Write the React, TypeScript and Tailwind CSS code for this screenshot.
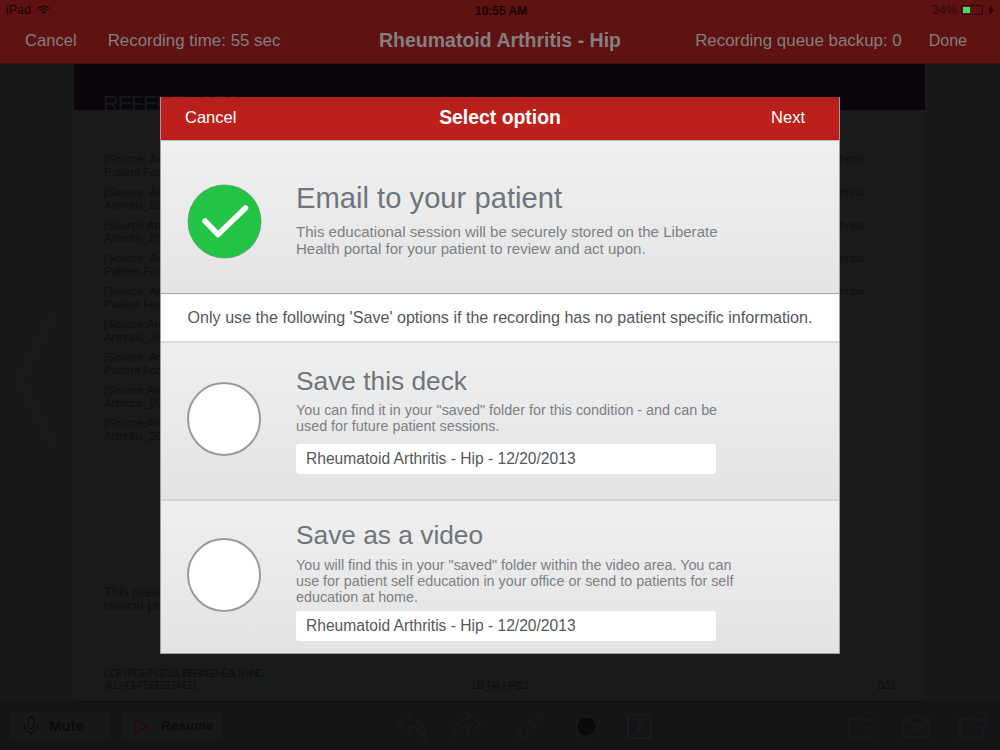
import { Camera, Mic } from "lucide-react";

const sources = [
  { first: "[Source: American College of Rheumatology,", second: "Patient Fact Sheet", end: true },
  { first: "[Source: American College of Rheumatology,", second: "Arthritis_2013", end: true },
  { first: "[Source:American College of Rheumatology,", second: "Arthritis_2013", end: true },
  { first: "[Source: American College of Rheumatology,", second: "Patient Fact Sheet", end: true },
  { first: "[Source: American College of Rheumatology,", second: "Patient Fact Sheet", end: true },
  { first: "[Source:American College of Rheumatology,", second: "Arthritis_2013", end: false },
  { first: "[Source: American College of Rheumatology,", second: "Patient Fact Sheet", end: false },
  { first: "[Source:American College of Rheumatology,", second: "Arthritis_2013", end: false },
  { first: "[Source:American College of Rheumatology,", second: "Arthritis_2013", end: false },
];

function StatusBar() {
  return (
    <div className="relative flex h-[20px] items-center justify-between pl-[6px] pr-[5px] text-[12.5px] text-[#170606]">
      <div className="flex items-center gap-[6px]">
        <span>iPad</span>
        <svg width="13" height="10" viewBox="0 0 13 10" fill="none" stroke="#170606" strokeWidth="1.4">
          <path d="M.8 3.4a8.2 8.2 0 0 1 11.4 0" />
          <path d="M2.8 5.5a5.4 5.4 0 0 1 7.4 0" />
          <path d="M4.8 7.5a2.5 2.5 0 0 1 3.4 0" />
          <path d="M6.5 10 5.4 8.7a1.6 1.6 0 0 1 2.2 0z" fill="#170606" stroke="none" />
        </svg>
      </div>
      <span className="absolute left-[475px] top-[2px] text-[12px] font-bold">10:55 AM</span>
      <div className="flex items-center gap-[3px]">
        <span className="text-[#2a0808]">34%</span>
        <div className="ml-[1px] flex h-[10px] w-[22px] items-stretch rounded-[2px] border border-[#2a0808] p-[1px]">
          <div className="w-[7px] bg-[#4cd964]" />
        </div>
        <svg width="8" height="10" viewBox="0 0 8 10" className="ml-[1px]">
          <path d="M5 0 1 5.6h2.4L2.6 10 7 4.2H4.4z" fill="#170606" />
        </svg>
      </div>
    </div>
  );
}

function NavBar() {
  return (
    <div className="relative flex h-[42px] items-center pl-[25px] pr-[33px] text-[16.9px] text-[#857f7f]">
      <span className="text-[16.6px]">Cancel</span>
      <span className="ml-[31px]">Recording time: 55 sec</span>
      <span className="absolute left-0 right-0 text-center text-[19.5px] font-bold">Rheumatoid Arthritis - Hip</span>
      <span className="ml-auto">Recording queue backup: 0</span>
      <span className="ml-[27px] text-[16px]">Done</span>
    </div>
  );
}

function Document() {
  return (
    <div className="flex flex-1 overflow-hidden bg-[#181919]">
      <div className="flex w-[74px] items-center justify-start pl-[18px]">
        <svg width="36" height="130" viewBox="0 0 36 130" fill="none" stroke="#1b1c1c" strokeWidth="1.5" className="mb-[6px]">
          <path d="M34 2 2 62l32 66" />
        </svg>
      </div>
      <div className="flex w-[851px] flex-col bg-[#1a1c1b] text-[#0e0f0f]">
        <div className="h-[46px] bg-[#0a060c]" />
        <h2 className="-mt-[19px] ml-[29px] text-[22px] leading-[26px] tracking-[-1.4px] text-[#17181a]">REFERENCES</h2>
        <div className="mt-[36px] flex flex-col gap-[7px] pl-[30px] pr-[61px] text-[11.5px] leading-[13px]">
          {sources.map((s, i) => (
            <div key={i}>
              <div className="flex justify-between">
                <span>{s.first}</span>
                {s.end && <span>Arthritis</span>}
              </div>
              <div>{s.second}</div>
            </div>
          ))}
        </div>
        <div className="ml-[30px] mt-[142px] text-[12.5px] leading-[14px] tracking-[0.3px]">
          <div>This presentation is for educational use within</div>
          <div>clinical practice only</div>
        </div>
        <div className="mt-auto flex items-end pb-[10px] pl-[30px] text-[10.5px] leading-[12px] tracking-[-1.6px]">
          <div className="w-[368px]">
            <div>COPYRIGHT ©2013 LIBERATE HEALTH INC.</div>
            <div>ALL RIGHTS RESERVED.</div>
          </div>
          <div className="w-[404px]">LIB_RA_HIP101</div>
          <div>11/13</div>
        </div>
      </div>
      <div className="w-[75px]" />
    </div>
  );
}

function ToolButton({ label, size, children }: { label: string; size: string; children: React.ReactNode }) {
  return (
    <div className={`${size} flex h-[29px] w-[102px] items-center rounded-[3px] bg-[#18191b] pl-[11px] font-bold text-[#0b0b0c]`}>
      <div className="w-[29px]">{children}</div>
      <span>{label}</span>
    </div>
  );
}

function Toolbar() {
  const icon = "#1a1b1d";
  return (
    <div className="flex h-[49px] items-center border-t border-[#111214] bg-[#141517] pl-[9px]">
      <ToolButton label="Mute" size="text-[15px]">
        <Mic size={22} strokeWidth={1} color="#080809" />
      </ToolButton>
      <div className="w-[10px]" />
      <ToolButton label="Resume" size="text-[13.6px]">
        <svg width="17" height="17" viewBox="0 0 17 17" fill="none" stroke="#2e0808" strokeWidth="1.6" className="ml-[1px]">
          <path d="M2 1.5v14l13-7z" />
        </svg>
      </ToolButton>
      <div className="ml-[174px] flex items-center">
        <svg width="30" height="28" viewBox="0 0 30 28" fill="none" stroke={icon} strokeWidth="1.6" strokeLinejoin="round">
          <path d="M13 1 1 11.5 13 21v-6c7 0 12 3 15 12 1-11-4-19-15-20z" />
        </svg>
        <svg width="30" height="28" viewBox="0 0 30 28" fill="none" stroke={icon} strokeWidth="1.6" strokeLinejoin="round" className="ml-[24px]">
          <path d="M17 1 29 11.5 17 21v-6C10 15 5 18 2 27 1 16 6 8 17 7z" />
        </svg>
        <svg width="30" height="30" viewBox="0 0 30 30" fill="none" stroke={icon} strokeWidth="1.6" strokeLinejoin="round" className="ml-[34px]">
          <path d="M23 2 28 7 9 26 2 28l2-7z" />
          <path d="M20 5l5 5M4 21l5 5" />
        </svg>
        <div className="ml-[31px] h-[21px] w-[21px] rounded-full border border-[#1c1d1f] bg-[#090a0a]" />
        <div className="ml-[30px] flex h-[25px] w-[25px] items-center justify-center rounded-[2px] border-2 border-[#1a1b1d] text-[18px] font-bold text-[#1a1b1d] [font-family:'Liberation_Serif',serif]">
          T
        </div>
        <svg width="30" height="28" viewBox="0 0 30 28" fill="none" stroke={icon} strokeWidth="1.6" className="ml-[195px]">
          <path d="M15 7H2v19h23v-9" />
          <circle cx="21" cy="8" r="7" />
          <path d="M17.5 8h7" />
        </svg>
        <Camera size={31} strokeWidth={1.5} color={icon} className="ml-[24px]" />
        <svg width="30" height="28" viewBox="0 0 30 28" fill="none" stroke={icon} strokeWidth="1.6" className="ml-[26px]">
          <path d="M15 7H2v19h23v-9" />
          <circle cx="21" cy="8" r="7" />
          <path d="M17.5 8h7M21 4.5v7" />
        </svg>
      </div>
    </div>
  );
}

function OptionBody({ title, lines, titleSize }: { title: string; lines: string[]; titleSize: string }) {
  return (
    <>
      <div className={`${titleSize} text-[#6f757a]`}>{title}</div>
      <div className="text-[#7c8084]">
        {lines.map((l) => (
          <div key={l}>{l}</div>
        ))}
      </div>
    </>
  );
}

function NameField() {
  return (
    <div className="flex h-[30px] w-[420px] items-center rounded-[3px] bg-white pl-[10px] text-[15.6px] text-[#55585b]">
      Rheumatoid Arthritis - Hip - 12/20/2013
    </div>
  );
}

function Radio() {
  return <div className="h-[74px] w-[74px] rounded-full border-2 border-[#9a9a9a] bg-white" />;
}

function Modal() {
  return (
    <div className="absolute left-[160px] top-[97px] flex h-[557px] w-[680px] flex-col overflow-hidden border-x border-b border-[#9d9d9d] bg-white">
      <div className="relative flex h-[43px] shrink-0 items-center justify-between bg-[linear-gradient(#b41f1b,#c0201c_55%,#b81f1b)] px-[24px] pb-[2px] text-[16.5px] text-white">
        <span>Cancel</span>
        <span className="absolute left-0 right-0 top-[6px] text-center text-[19.4px] font-bold">Select option</span>
        <span className="mr-[10px]">Next</span>
      </div>
      <div className="flex h-[154px] shrink-0 border-y border-b-[#a5a5a5] border-t-[#bdbdbd] bg-[linear-gradient(#f0f0f0,#e4e4e4)]">
        <div className="w-[135px] pl-[27px] pt-[44px]">
          <div className="h-[73px] w-[73px] rounded-full bg-[#21c445] shadow-[0_0_0_0.5px_#9a9a9a]">
            <svg width="73" height="73" viewBox="0 0 73 73" fill="none" stroke="white" strokeWidth="5.5" strokeLinecap="round" strokeLinejoin="round">
              <path d="M17 36 30 49.5 57.5 23" />
            </svg>
          </div>
        </div>
        <div className="pt-[40px] text-[15.05px] leading-[17px]">
          <OptionBody
            title="Email to your patient"
            titleSize="text-[29.2px] leading-[34px] mb-[8px]"
            lines={[
              "This educational session will be securely stored on the Liberate",
              "Health portal for your patient to review and act upon.",
            ]}
          />
        </div>
      </div>
      <div className="flex h-[49px] shrink-0 items-center justify-center border-b-2 border-[#dcdcdc] text-[16.13px] text-[#55585b]">
        Only use the following 'Save' options if the recording has no patient specific information.
      </div>
      <div className="flex h-[158px] shrink-0 border-b-2 border-[#d4d4d4] bg-[linear-gradient(#efefef,#e3e3e3)]">
        <div className="w-[135px] pl-[26px] pt-[39px]">
          <Radio />
        </div>
        <div className="pt-[22px] text-[14.35px] leading-[16px]">
          <OptionBody
            title="Save this deck"
            titleSize="text-[26.3px] leading-[32px] mb-[5px]"
            lines={[
              'You can find it in your "saved" folder for this condition - and can be',
              "used for future patient sessions.",
            ]}
          />
          <div className="mt-[10px]">
            <NameField />
          </div>
        </div>
      </div>
      <div className="flex flex-1 bg-[linear-gradient(#efefef,#e3e3e3)]">
        <div className="w-[135px] pl-[26px] pt-[37px]">
          <Radio />
        </div>
        <div className="pt-[18px] text-[14.35px] leading-[16px]">
          <OptionBody
            title="Save as a video"
            titleSize="text-[26.3px] leading-[32px] mb-[6px]"
            lines={[
              'You will find this in your "saved" folder within the video area. You can',
              "use for patient self education in your office or send to patients for self",
              "education at home.",
            ]}
          />
          <div className="mt-[6px]">
            <NameField />
          </div>
        </div>
      </div>
    </div>
  );
}

export default function App() {
  return (
    <div className="relative flex h-[750px] w-[1000px] flex-col overflow-hidden bg-[#181919] [font-family:'Liberation_Sans',Arial,sans-serif]">
      <div className="h-[64px] shrink-0 border-b border-[#4a0e0e] bg-[#5e1212]">
        <StatusBar />
        <NavBar />
      </div>
      <Document />
      <Toolbar />
      <Modal />
    </div>
  );
}
